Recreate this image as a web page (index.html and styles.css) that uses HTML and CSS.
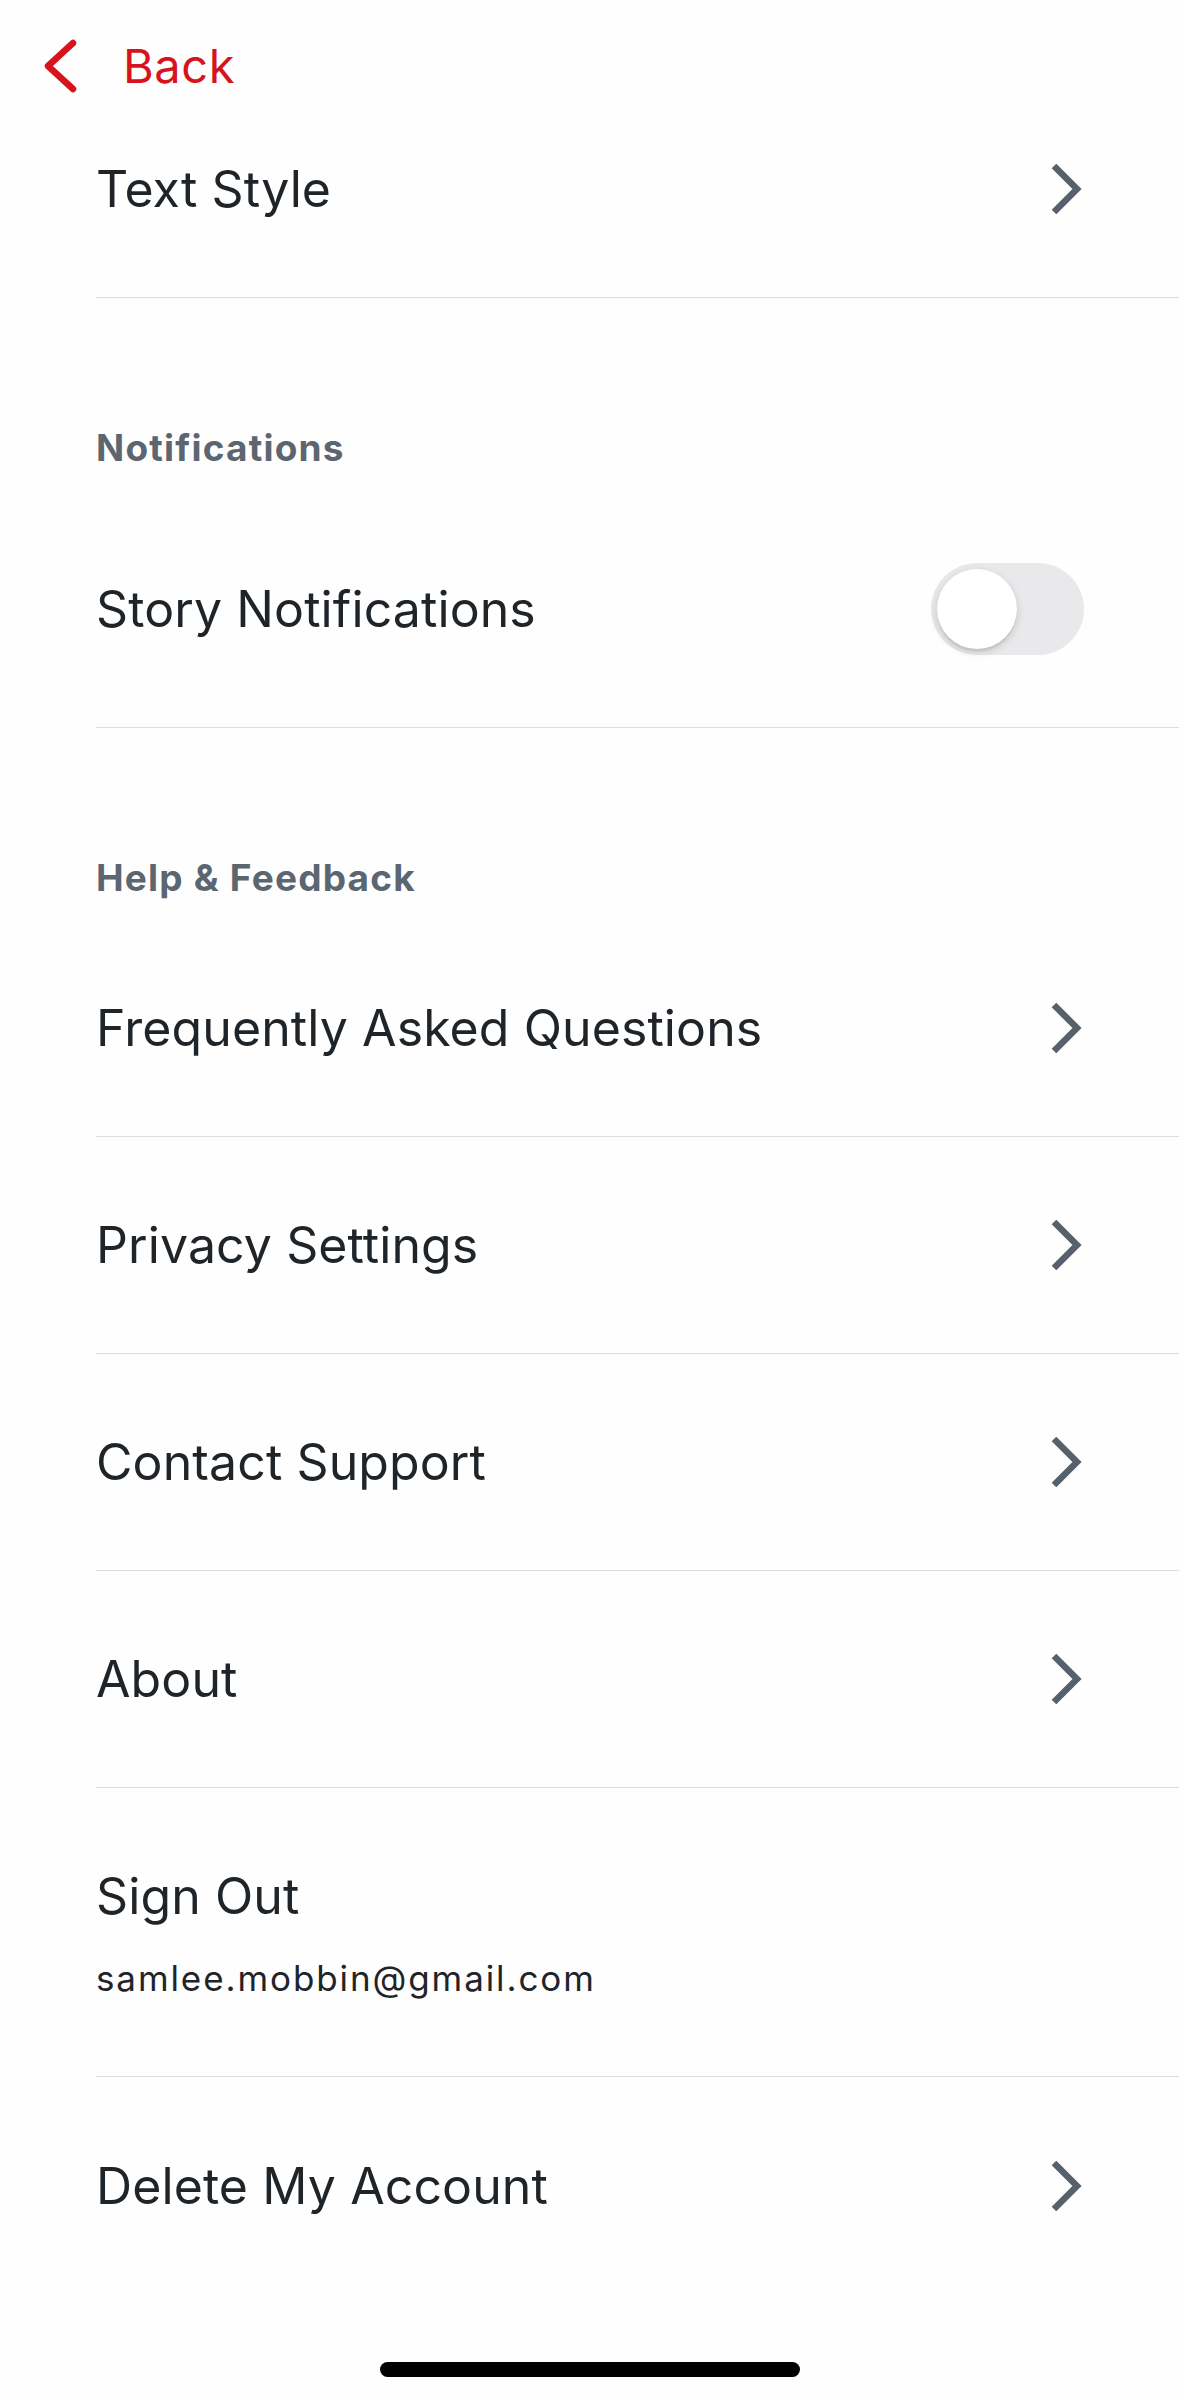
FILE: index.html
```html
<!DOCTYPE html>
<html lang="en">
<head>
<meta charset="utf-8">
<title>Settings</title>
<link rel="stylesheet" href="styles.css">
</head>
<body>
<div class="screen">
  <header class="topbar">
    <svg class="back-icon" width="34" height="54" viewBox="0 0 34 54" aria-hidden="true">
      <polyline points="29,4 4,27 29,50" fill="none" stroke="#d7141d" stroke-width="6.5" stroke-linecap="round" stroke-linejoin="round"/>
    </svg>
    <span class="back-label">Back</span>
  </header>

  <ul class="list">
    <li class="row"><span class="row-label">Text Style</span><svg class="chev" width="32" height="50" viewBox="0 0 32 50" aria-hidden="true"><polyline points="3,2 26,25 3,48" fill="none" stroke="#56616b" stroke-width="6.5" stroke-linejoin="miter"/></svg></li>
  </ul>

  <h2 class="section-title">Notifications</h2>
  <ul class="list">
    <li class="row row-toggle"><span class="row-label">Story Notifications</span><span class="switch"><span class="knob"></span></span></li>
  </ul>

  <h2 class="section-title">Help &amp; Feedback</h2>
  <ul class="list">
    <li class="row"><span class="row-label">Frequently Asked Questions</span><svg class="chev" width="32" height="50" viewBox="0 0 32 50" aria-hidden="true"><polyline points="3,2 26,25 3,48" fill="none" stroke="#56616b" stroke-width="6.5" stroke-linejoin="miter"/></svg></li>
    <li class="row"><span class="row-label">Privacy Settings</span><svg class="chev" width="32" height="50" viewBox="0 0 32 50" aria-hidden="true"><polyline points="3,2 26,25 3,48" fill="none" stroke="#56616b" stroke-width="6.5" stroke-linejoin="miter"/></svg></li>
    <li class="row"><span class="row-label">Contact Support</span><svg class="chev" width="32" height="50" viewBox="0 0 32 50" aria-hidden="true"><polyline points="3,2 26,25 3,48" fill="none" stroke="#56616b" stroke-width="6.5" stroke-linejoin="miter"/></svg></li>
    <li class="row"><span class="row-label">About</span><svg class="chev" width="32" height="50" viewBox="0 0 32 50" aria-hidden="true"><polyline points="3,2 26,25 3,48" fill="none" stroke="#56616b" stroke-width="6.5" stroke-linejoin="miter"/></svg></li>
    <li class="row row-signout"><span class="row-label">Sign Out</span><span class="row-sub">samlee.mobbin@gmail.com</span></li>
    <li class="row row-last"><span class="row-label">Delete My Account</span><svg class="chev" width="32" height="50" viewBox="0 0 32 50" aria-hidden="true"><polyline points="3,2 26,25 3,48" fill="none" stroke="#56616b" stroke-width="6.5" stroke-linejoin="miter"/></svg></li>
  </ul>

  <div class="home-indicator"></div>
</div>
</body>
</html>
```

FILE: styles.css
```css
* { box-sizing: border-box; }

html, body {
  margin: 0;
  padding: 0;
  background: #fefefe;
}

body {
  font-family: Inter, "Liberation Sans", sans-serif;
  color: #1f2429;
}

.screen {
  width: 1179px;
  min-height: 2396px;
  display: flex;
  flex-direction: column;
}

.topbar {
  height: 81px;
  padding-top: 50px;
  padding-left: 44px;
  display: flex;
  align-items: center;
}

.back-icon {
  flex: none;
  display: block;
}

.back-label {
  margin-left: 45px;
  font-size: 47px;
  line-height: 57px;
  color: #d7141d;
  letter-spacing: 0.6px;
}

.list {
  list-style: none;
  margin: 0;
  padding: 0 0 0 96px;
}

.row {
  height: 217px;
  display: flex;
  align-items: center;
  justify-content: space-between;
  padding-right: 96px;
  border-bottom: 1px solid #dddce3;
}

.row-last {
  border-bottom: none;
}

.row-label {
  font-size: 50px;
  line-height: 60px;
  letter-spacing: 0.1px;
}

.chev {
  flex: none;
  display: block;
}

.section-title {
  margin: 0;
  padding: 127px 0 20px 96px;
  height: 192px;
  font-size: 37px;
  line-height: 45px;
  font-weight: 700;
  color: #5b6670;
  letter-spacing: 1.2px;
}

.row-toggle {
  height: 238px;
}

.switch {
  flex: none;
  position: relative;
  width: 153px;
  height: 92px;
  border-radius: 46px;
  background: #e9e9eb;
  margin-right: -1px;
}

.knob {
  position: absolute;
  left: 6px;
  top: 6px;
  width: 80px;
  height: 80px;
  border-radius: 50%;
  background: #fff;
  box-shadow: 0 3px 8px rgba(0, 0, 0, 0.15), 0 3px 1px rgba(0, 0, 0, 0.06);
}

.row-signout {
  height: 289px;
  flex-direction: column;
  align-items: flex-start;
  justify-content: center;
  padding-top: 2px;
}

.row-sub {
  margin-top: 30px;
  font-size: 35px;
  line-height: 45px;
  letter-spacing: 1.9px;
}

.home-indicator {
  width: 420px;
  height: 15px;
  border-radius: 8px;
  background: #000;
  margin: 68px auto 0;
}
```
